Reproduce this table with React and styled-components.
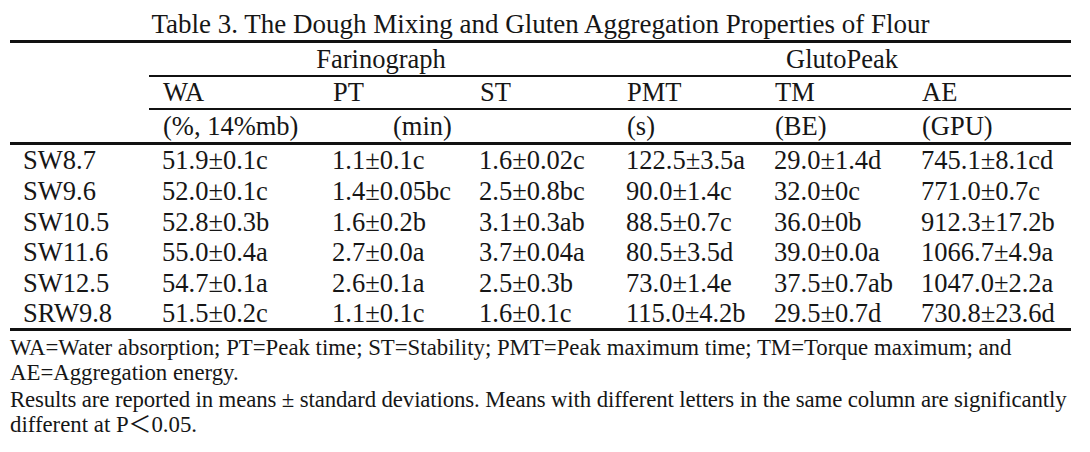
import React from "react";
import styled, { createGlobalStyle } from "styled-components";

const Global = createGlobalStyle`
  html, body { margin: 0; padding: 0; background: #fff; }
  body { font-family: "Liberation Serif", "Times New Roman", "Noto Sans CJK SC", serif; color: #161616; }
`;

const Page = styled.div`
  width: 1061px;
  padding: 8px 10px 0 10px;
`;

const Title = styled.div`
  font-size: 27px;
  line-height: 32px;
  text-align: center;
  white-space: nowrap;
`;

const Table = styled.table`
  width: 1061px;
  border-collapse: separate;
  border-spacing: 0;
  border-top: 3px solid #111;
  table-layout: fixed;
  font-size: 26.5px;
`;

const Col = styled.col`
  width: ${(p) => p.$w}px;
`;

const HeadCell = styled.td`
  padding: 0 0 0 ${(p) => (p.$center ? 0 : p.$indent ?? 14)}px;
  text-align: ${(p) => (p.$center ? "center" : "left")};
  height: ${(p) => p.$h}px;
  line-height: ${(p) => p.$h}px;
  border-bottom: ${(p) => p.$rule}px solid #111;
  white-space: nowrap;
  vertical-align: middle;
`;

const CornerCell = styled.td`
  border-bottom: 3px solid #111;
`;

const Row = styled.tr`
  height: 30.67px;
`;

const Cell = styled.td`
  padding: 0 0 0 ${(p) => (p.$first ? 13 : 13)}px;
  line-height: 30px;
  white-space: nowrap;
  border-bottom: ${(p) => (p.$last ? "3px solid #111" : "none")};
`;

const Notes = styled.div`
  font-size: 22.8px;
  line-height: 25px;
  padding-top: 4px;
  white-space: nowrap;
`;

const NoteLine = styled.div`
  margin-top: ${(p) => p.$gap || 0}px;
  letter-spacing: ${(p) => (p.$tight ? "-0.12px" : "0")};
`;

const rows = [
  ["SW8.7", "51.9±0.1c", "1.1±0.1c", "1.6±0.02c", "122.5±3.5a", "29.0±1.4d", "745.1±8.1cd"],
  ["SW9.6", "52.0±0.1c", "1.4±0.05bc", "2.5±0.8bc", "90.0±1.4c", "32.0±0c", "771.0±0.7c"],
  ["SW10.5", "52.8±0.3b", "1.6±0.2b", "3.1±0.3ab", "88.5±0.7c", "36.0±0b", "912.3±17.2b"],
  ["SW11.6", "55.0±0.4a", "2.7±0.0a", "3.7±0.04a", "80.5±3.5d", "39.0±0.0a", "1066.7±4.9a"],
  ["SW12.5", "54.7±0.1a", "2.6±0.1a", "2.5±0.3b", "73.0±1.4e", "37.5±0.7ab", "1047.0±2.2a"],
  ["SRW9.8", "51.5±0.2c", "1.1±0.1c", "1.6±0.1c", "115.0±4.2b", "29.5±0.7d", "730.8±23.6d"],
];

const widths = [139, 170, 147, 147, 148, 147, 163];

export default function App() {
  return (
    <>
      <Global />
      <Page>
        <Title>Table 3. The Dough Mixing and Gluten Aggregation Properties of Flour</Title>
        <Table>
          <colgroup>
            {widths.map((w, i) => (
              <Col key={i} $w={w} />
            ))}
          </colgroup>
          <thead>
            <tr>
              <CornerCell rowSpan={3} />
              <HeadCell colSpan={3} $center $h={32} $rule={2}>Farinograph</HeadCell>
              <HeadCell colSpan={3} $center $h={32} $rule={2}>GlutoPeak</HeadCell>
            </tr>
            <tr>
              {["WA", "PT", "ST", "PMT", "TM", "AE"].map((t) => (
                <HeadCell key={t} $h={31} $rule={2}>{t}</HeadCell>
              ))}
            </tr>
            <tr>
              <HeadCell $h={32} $rule={3}>(%, 14%mb)</HeadCell>
              <HeadCell $h={32} $rule={3} $indent={74}>(min)</HeadCell>
              <HeadCell $h={32} $rule={3}></HeadCell>
              <HeadCell $h={32} $rule={3}>(s)</HeadCell>
              <HeadCell $h={32} $rule={3}>(BE)</HeadCell>
              <HeadCell $h={32} $rule={3}>(GPU)</HeadCell>
            </tr>
          </thead>
          <tbody>
            {rows.map((r, ri) => (
              <Row key={r[0]}>
                {r.map((c, ci) => (
                  <Cell key={ci} $first={ci === 0} $last={ri === rows.length - 1}>{c}</Cell>
                ))}
              </Row>
            ))}
          </tbody>
        </Table>
        <Notes>
          <NoteLine>WA=Water absorption; PT=Peak time; ST=Stability; PMT=Peak maximum time; TM=Torque maximum; and</NoteLine>
          <NoteLine>AE=Aggregation energy.</NoteLine>
          <NoteLine $gap={2} $tight>Results are reported in means ± standard deviations. Means with different letters in the same column are significantly</NoteLine>
          <NoteLine>different at P＜0.05.</NoteLine>
        </Notes>
      </Page>
    </>
  );
}
